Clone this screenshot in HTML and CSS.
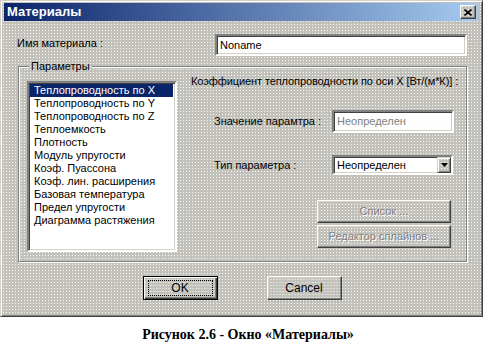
FILE: index.html
```html
<!DOCTYPE html>
<html lang="ru">
  <head>
    <meta charset="utf-8" />
    <title>Материалы</title>
    <link rel="stylesheet" href="styles.css">
  </head>
  <body>
    <div class="window dither">
      <div class="titlebar">
        <span class="title">Материалы</span>
        <span class="close-btn dither">
          <svg width="8" height="7" viewBox="0 0 8 7">
            <path d="M0.5 0.5 L7.5 6.5 M7.5 0.5 L0.5 6.5" stroke="#000" stroke-width="1.6" fill="none" />
          </svg>
        </span>
      </div>

      <div class="content">
        <div class="name-row">
          <span class="label">Имя материала :</span>
          <span class="field name-field">Noname</span>
        </div>

        <fieldset class="group">
          <legend class="dither">Параметры</legend>
          <div class="group-body">
            <ul class="listbox">
              <li class="selected">Теплопроводность по X</li>
              <li>Теплопроводность по Y</li>
              <li>Теплопроводность по Z</li>
              <li>Теплоемкость</li>
              <li>Плотность</li>
              <li>Модуль упругости</li>
              <li>Коэф. Пуассона</li>
              <li>Коэф. лин. расширения</li>
              <li>Базовая температура</li>
              <li>Предел упругости</li>
              <li>Диаграмма растяжения</li>
            </ul>

            <div class="props">
              <div class="coef">Коэффициент теплопроводности по оси X [Вт/(м*К)] :</div>
              <div class="prop-row value-row">
                <span class="prop-label">Значение парамтра :</span>
                <span class="field disabled-field dither">Неопределен</span>
              </div>
              <div class="prop-row type-row">
                <span class="prop-label">Тип параметра :</span>
                <span class="field combo">
                  <span class="combo-text">Неопределен</span>
                  <span class="combo-btn dither">
                    <svg width="7" height="4" viewBox="0 0 7 4"><path d="M0 0 H7 L3.5 4 Z" fill="#000" /></svg>
                  </span>
                </span>
              </div>
              <div class="side-buttons">
                <span class="btn dither disabled">Список ...</span>
                <span class="btn dither disabled">Редактор сплайнов ...</span>
              </div>
            </div>
          </div>
        </fieldset>

        <div class="footer">
          <span class="btn dither btn-default"><span class="focus">OK</span></span>
          <span class="btn dither">Cancel</span>
        </div>
      </div>
    </div>

    <p class="caption">Рисунок 2.6 - Окно «Материалы»</p>
  </body>
</html>
```

FILE: styles.css
```css
html,
body {
  margin: 0;
  padding: 0;
  background: #fff;
  font-family: 'Liberation Sans', Arial, sans-serif;
  font-size: 11px;
  color: #000;
}
.dither {
  background-color: #c2c1bc;
  background-image: conic-gradient(at 1px 1px, transparent 75%, #fcfcf4 0);
  background-size: 3px 3px;
  background-attachment: fixed;
}
.window {
  width: 483px;
  height: 317px;
  box-sizing: border-box;
  padding: 2px 4px 0 3px;
  border: 1px solid;
  border-color: #d4d0c8 #404040 #404040 #d4d0c8;
  box-shadow: inset 1px 1px #fff, inset -1px -1px #808080;
}
.titlebar {
  display: flex;
  align-items: center;
  justify-content: space-between;
  height: 18px;
  padding: 0 2px 0 3px;
  background: linear-gradient(to right, #0a246a, #a6caf0);
}
.title {
  color: #fff;
  font-size: 13px;
  font-weight: bold;
  line-height: 18px;
}
.close-btn {
  display: flex;
  align-items: center;
  justify-content: center;
  width: 16px;
  height: 14px;
  box-sizing: border-box;
  border: 1px solid;
  border-color: #fff #404040 #404040 #fff;
  box-shadow: inset -1px -1px #808080;
}
.content {
  padding: 0 11px 0 13px;
}
.name-row {
  display: flex;
  align-items: flex-start;
  justify-content: space-between;
  margin-top: 13px;
}
.label {
  padding-top: 3px;
  line-height: 13px;
}
.field {
  display: flex;
  align-items: center;
  box-sizing: border-box;
  border: 2px solid;
  border-color: #808080 #fff #fff #808080;
  box-shadow: inset 1px 1px #404040, inset -1px -1px #d4d0c8;
  background-color: #fff;
  padding: 0 3px;
  line-height: 13px;
}
.name-field {
  width: 252px;
  height: 22px;
}
.group {
  margin: 4px 0 0 1px;
  padding: 3px 0 9px 8px;
  border: 1px solid #808080;
  box-shadow: inset 1px 1px #fff, 1px 1px #fff;
  min-width: 0;
}
.group legend {
  margin-left: 2px;
  padding: 0 2px;
  line-height: 12px;
}
.group-body {
  display: flex;
  align-items: flex-start;
}
.listbox {
  margin: 6px 0 0 0;
  padding: 0;
  list-style: none;
  width: 150px;
  height: 171px;
  box-sizing: border-box;
  border: 2px solid;
  border-color: #808080 #fff #fff #808080;
  box-shadow: inset 1px 1px #404040, inset -1px -1px #d4d0c8;
  background: #fff;
  padding: 1px 2px 0 1px;
}
.listbox li {
  padding-left: 4px;
  line-height: 13px;
  white-space: nowrap;
}
.listbox .selected {
  background: #0a246a;
  color: #fff;
}
.props {
  margin-left: 14px;
  flex: 1;
}
.coef {
  line-height: 13px;
  white-space: nowrap;
  letter-spacing: -0.1px;
}
.prop-row {
  display: flex;
  align-items: center;
  padding-left: 23px;
}
.value-row {
  margin-top: 22px;
}
.type-row {
  margin-top: 22px;
}
.prop-label {
  width: 118px;
  line-height: 13px;
}
.disabled-field {
  width: 122px;
  height: 23px;
  color: #808080;
}
.combo {
  width: 121px;
  height: 20px;
  justify-content: space-between;
  padding: 0 0 0 3px;
}
.combo-btn {
  display: flex;
  align-items: center;
  justify-content: center;
  width: 14px;
  height: 16px;
  box-sizing: border-box;
  border: 1px solid;
  border-color: #d4d0c8 #404040 #404040 #d4d0c8;
  box-shadow: inset 1px 1px #fff, inset -1px -1px #808080;
}
.side-buttons {
  display: flex;
  flex-direction: column;
  gap: 2px;
  margin: 25px 0 0 126px;
}
.btn {
  display: flex;
  align-items: center;
  justify-content: center;
  box-sizing: border-box;
  width: 134px;
  height: 23px;
  border: 1px solid;
  border-color: #fff #404040 #404040 #fff;
  box-shadow: inset -1px -1px #808080, inset 1px 1px #d4d0c8;
  line-height: 13px;
}
.btn.disabled {
  color: #808080;
  text-shadow: 1px 1px #fff;
}
.footer {
  display: flex;
  justify-content: center;
  gap: 49px;
  margin-top: 14px;
}
.footer .btn {
  width: 75px;
  height: 24px;
  font-size: 12px;
}
.btn-default {
  border: 1px solid #000;
  box-shadow: inset 1px 1px #fff, inset -1px -1px #404040, inset -2px -2px #808080;
}
.focus {
  display: flex;
  align-items: center;
  justify-content: center;
  width: 63px;
  height: 14px;
  border: 1px dotted #000;
}
.caption {
  margin: 10px 0 0 0;
  padding-left: 13px;
  text-align: center;
  font-family: 'Liberation Serif', 'Times New Roman', serif;
  font-size: 14px;
  font-weight: bold;
  line-height: 16px;
}
```
